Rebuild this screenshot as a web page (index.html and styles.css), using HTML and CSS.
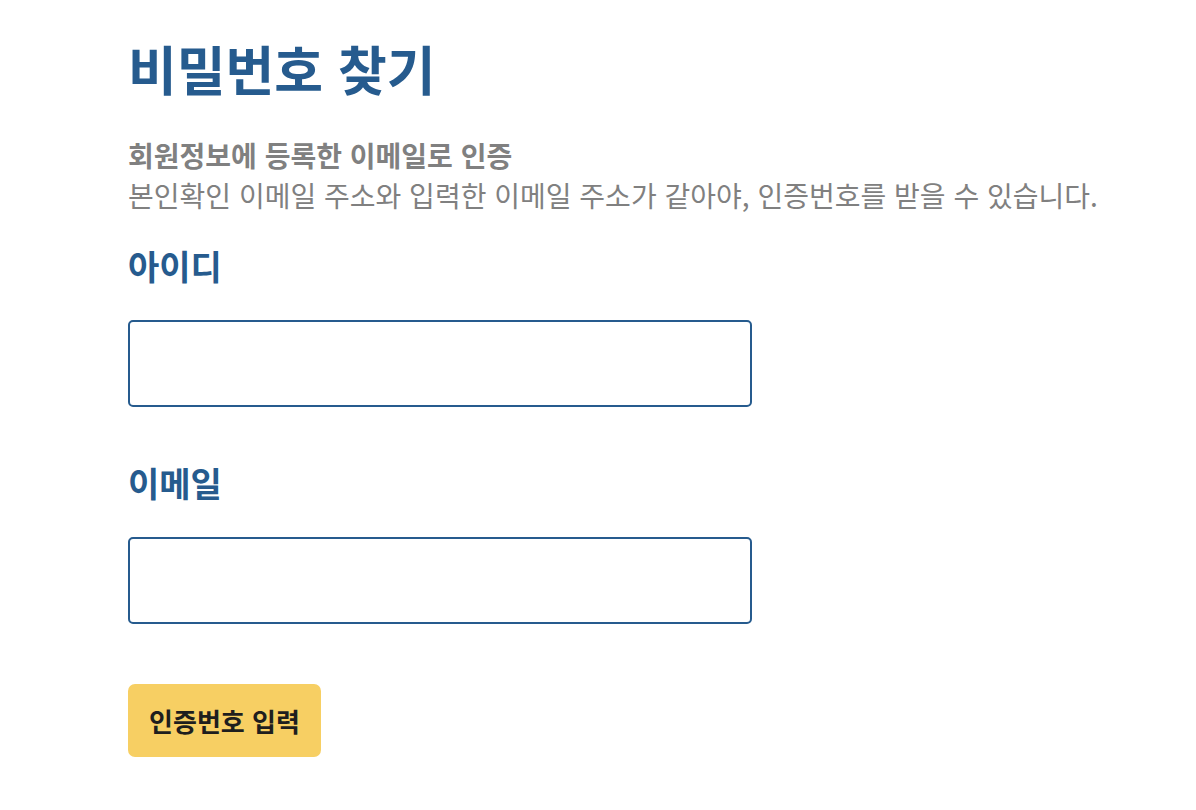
FILE: index.html
```html
<!DOCTYPE html>
<html lang="ko">
<head>
<meta charset="utf-8">
<link rel="stylesheet" href="styles.css">
</head>
<body>
<main class="page">
  <h1 class="title">비밀번호 찾기</h1>
  <p class="desc"><strong class="desc-strong">회원정보에 등록한 이메일로 인증</strong><br>본인확인 이메일 주소와 입력한 이메일 주소가 같아야, 인증번호를 받을 수 있습니다.</p>
  <form class="form">
    <label class="label" for="uid">아이디</label>
    <input class="field" id="uid" type="text">
    <label class="label label-second" for="mail">이메일</label>
    <input class="field" id="mail" type="email">
    <button class="btn" type="button">인증번호 입력</button>
  </form>
</main>
</body>
</html>
```
FILE: styles.css
```css
html, body {
  margin: 0;
  padding: 0;
  background: #fff;
}
body {
  font-family: "Noto Sans CJK KR", "Noto Sans", sans-serif;
}
.page {
  padding: 28px 0 0 128px;
}
.title {
  margin: 0;
  font-size: 53px;
  font-weight: 700;
  line-height: 80px;
  color: #265b8e;
}
.desc {
  margin: 27px 0 0;
  font-size: 28px;
  line-height: 40px;
  color: #808080;
}
.desc-strong {
  font-weight: 700;
}
.form {
  display: flex;
  flex-direction: column;
  align-items: flex-start;
}
.label {
  margin-top: 29px;
  font-size: 34px;
  font-weight: 700;
  line-height: 44px;
  color: #265b8e;
}
.label-second {
  margin-top: 54px;
}
.field {
  box-sizing: border-box;
  width: 624px;
  height: 87px;
  margin-top: 32px;
  border: 2px solid #265b8e;
  border-radius: 5px;
  background: #fff;
  font: inherit;
  padding: 0 16px;
}
.btn {
  margin-top: 60px;
  width: 193px;
  height: 73px;
  border: 0;
  border-radius: 7px;
  background: #f7cf63;
  color: #1e1e1e;
  font-family: inherit;
  font-size: 26px;
  font-weight: 700;
  padding: 0;
}
```
